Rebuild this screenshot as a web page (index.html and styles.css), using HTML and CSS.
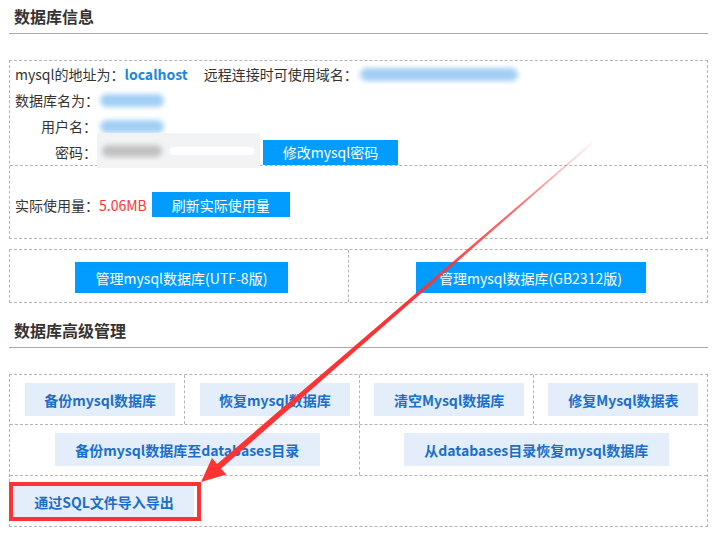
FILE: index.html
```html
<!DOCTYPE html>
<html lang="zh-CN">

<head>
    <meta charset="UTF-8">
    <meta name="viewport" content="width=device-width, initial-scale=1.0">
    <title>数据库管理</title>
    <link rel="stylesheet" href="styles.css">
</head>

<body>
    <div class="page">
        <h2 class="title">数据库信息</h2>

        <div class="info-box">
            <div class="info-top">
                <div class="row">
                    <span>mysql的地址为：</span><b class="host">localhost</b>
                    <span class="remote">远程连接时可使用域名：</span>
                    <span class="blur blur-domain"></span>
                </div>
                <div class="row">
                    <span class="label">数据库名为：</span>
                    <span class="blur blur-short"></span>
                </div>
                <div class="row">
                    <span class="label">用户名：</span>
                    <span class="blur blur-short"></span>
                </div>
                <div class="row">
                    <span class="label">密码：</span>
                    <span class="pwd">
                        <span class="pwd-gray"></span>
                        <span class="pwd-white"></span>
                    </span>
                    <button class="btn btn-pass">修改mysql密码</button>
                </div>
            </div>
            <div class="info-usage">
                <span>实际使用量：</span><span class="used">5.06MB</span>
                <button class="btn btn-refresh">刷新实际使用量</button>
            </div>
        </div>

        <div class="manage-box">
            <div class="cell">
                <button class="btn btn-utf">管理mysql数据库(UTF-8版)</button>
            </div>
            <div class="cell">
                <button class="btn btn-gb">管理mysql数据库(GB2312版)</button>
            </div>
        </div>

        <h2 class="title title-adv">数据库高级管理</h2>

        <div class="adv-box">
            <div class="adv-row four">
                <div class="cell"><button class="lbtn w150">备份mysql数据库</button></div>
                <div class="cell"><button class="lbtn w150">恢复mysql数据库</button></div>
                <div class="cell"><button class="lbtn w150">清空Mysql数据库</button></div>
                <div class="cell"><button class="lbtn w150">修复Mysql数据表</button></div>
            </div>
            <div class="adv-row two">
                <div class="cell"><button class="lbtn w265">备份mysql数据库至databases目录</button></div>
                <div class="cell"><button class="lbtn w265">从databases目录恢复mysql数据库</button></div>
            </div>
            <div class="adv-row last">
                <div class="highlight">
                    <button class="lbtn w180">通过SQL文件导入导出</button>
                </div>
            </div>
        </div>
    </div>

    <!-- annotation arrow -->
    <svg class="arrow" width="720" height="545" viewBox="0 0 720 545">
        <defs>
            <linearGradient id="fade" gradientUnits="userSpaceOnUse" x1="592" y1="143" x2="201" y2="482">
                <stop offset="0" stop-color="#ff3333" stop-opacity="0.1" />
                <stop offset="0.2" stop-color="#ff3333" stop-opacity="0.75" />
                <stop offset="0.45" stop-color="#ff3333" stop-opacity="1" />
                <stop offset="1" stop-color="#ff3333" stop-opacity="1" />
            </linearGradient>
        </defs>
        <polygon points="592.3,143.4 219.6,469.8 215.6,465.3 591.7,142.6" fill="url(#fade)" />
        <polygon points="201,482 226.3,474.6 211.9,458" fill="#ff3333" />
    </svg>
</body>

</html>
```

FILE: styles.css
```css
body {
    margin: 0;
    position: relative;
    width: 720px;
    height: 545px;
    overflow: hidden;
    font-family: "Noto Sans CJK SC", "Noto Sans", sans-serif;
    font-size: 14px;
    color: #333;
    background: #fff;
}

.page {
    padding-left: 9px;
    width: 699px;
}

.title {
    margin: 0;
    height: 33px;
    line-height: 33px;
    padding-left: 5px;
    font-size: 16px;
    font-weight: bold;
    color: #333;
    border-bottom: 1px solid #aaa;
}

.title-adv {
    margin-top: 11px;
}

.btn {
    border: none;
    background: #009cff;
    color: #fff;
    font-family: inherit;
    font-size: 14px;
    padding: 0;
    cursor: pointer;
}

/* info box */
.info-box {
    margin-top: 26px;
    border: 1px dashed #b5b5b5;
}

.info-top {
    padding-left: 5px;
}

.row {
    display: flex;
    align-items: center;
    height: 26px;
    white-space: nowrap;
}

.label {
    width: 82px;
    text-align: right;
}

.host {
    color: #1a87da;
    font-weight: bold;
}

.remote {
    margin-left: 16px;
}

.blur {
    display: inline-block;
    height: 13px;
    border-radius: 7px;
    background: #a3cff5;
    filter: blur(2.5px);
}

.blur-domain {
    width: 158px;
    margin-left: 2px;
}

.blur-short {
    width: 64px;
    margin-left: 3px;
}

.pwd {
    position: relative;
    display: flex;
    align-items: center;
    width: 163px;
    height: 35px;
    margin: -6px 0 -3px 0;
    background: #f2f3f5;
}

.pwd-gray {
    width: 60px;
    height: 12px;
    margin-left: 5px;
    border-radius: 6px;
    background: #c2c2c2;
    filter: blur(2.5px);
}

.pwd-white {
    width: 84px;
    height: 8px;
    margin-left: 8px;
    border-radius: 3px;
    background: #fff;
}

.btn-pass {
    width: 135px;
    height: 25px;
    margin-left: 3px;
}

.info-usage {
    display: flex;
    align-items: center;
    height: 25px;
    padding: 26px 0 21px 5px;
    border-top: 1px dashed #b5b5b5;
}

.used {
    color: #ff3333;
}

.btn-refresh {
    width: 138px;
    height: 25px;
    margin-left: 5px;
}

/* manage box */
.manage-box {
    margin-top: 10px;
    display: grid;
    grid-template-columns: 338px 1fr;
    border: 1px dashed #b5b5b5;
}

.manage-box .cell {
    display: flex;
    justify-content: center;
    padding: 12px 0 9px 5px;
}

.manage-box .cell + .cell {
    border-left: 1px dashed #b5b5b5;
}

.btn-utf {
    width: 213px;
    height: 31px;
}

.btn-gb {
    width: 230px;
    height: 31px;
}

/* advanced box */
.adv-box {
    margin-top: 26px;
    border: 1px dashed #b5b5b5;
}

.adv-row {
    display: grid;
}

.adv-row + .adv-row {
    border-top: 1px dashed #b5b5b5;
}

.four {
    grid-template-columns: repeat(4, 1fr);
}

.two {
    grid-template-columns: 1fr 1fr;
}

.adv-row .cell {
    display: flex;
    justify-content: center;
    padding: 8px 0 8px 6px;
}

.adv-row .cell + .cell {
    border-left: 1px dashed #b5b5b5;
}

.two .cell {
    padding-bottom: 9px;
}

.lbtn {
    height: 33px;
    border: none;
    padding: 0;
    background: #e4eefa;
    color: #1b6fc8;
    font-family: inherit;
    font-size: 14px;
    font-weight: bold;
}

.w150 {
    width: 150px;
}

.w265 {
    width: 265px;
}

.w180 {
    width: 180px;
    height: 31px;
}

.last {
    padding: 6px 0 5px;
}

.highlight {
    width: 182px;
    margin-left: -1px;
    padding: 0 1px;
    border: 4px solid #ff3333;
    box-sizing: content-box;
}

.highlight .lbtn {
    display: block;
}

.arrow {
    position: absolute;
    top: 0;
    left: 0;
    pointer-events: none;
}
```
